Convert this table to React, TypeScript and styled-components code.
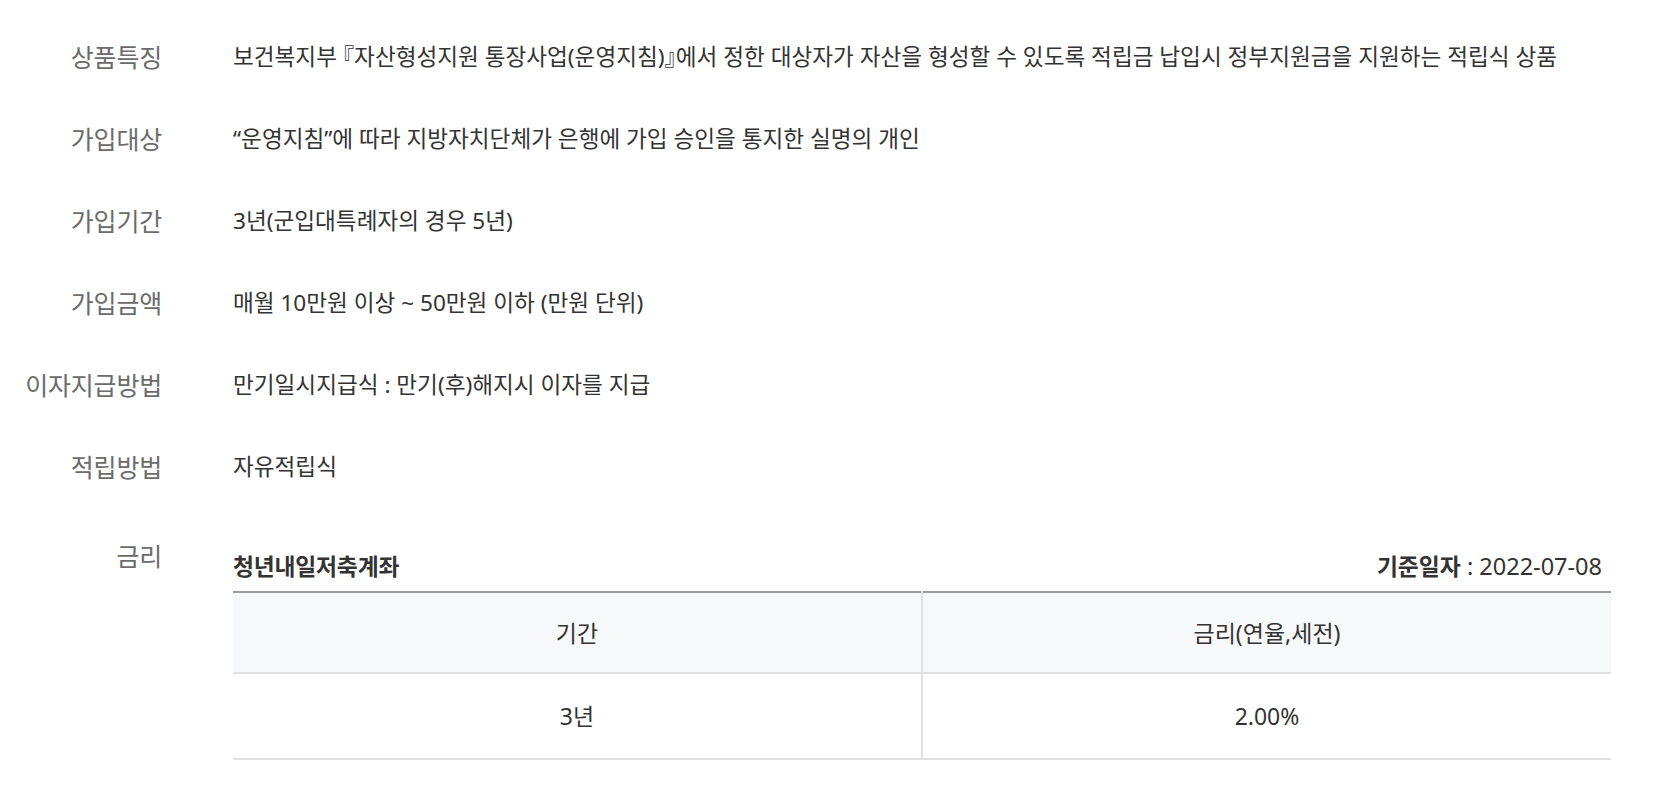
import React from 'react';
import styled, { createGlobalStyle } from 'styled-components';

const GlobalStyle = createGlobalStyle`
  html, body { margin: 0; padding: 0; background: #ffffff; }
  body {
    font-family: "Noto Sans", "Noto Sans CJK KR", sans-serif;
    color: #333333;
  }
  * { box-sizing: border-box; }
`;

const Page = styled.div`
  padding: 16px 49px 0 0;
`;

const InfoList = styled.dl`
  margin: 0;
  display: flex;
  flex-direction: column;
`;

const Row = styled.div<{ $top?: number }>`
  display: flex;
  align-items: flex-start;
  padding: ${(p) => p.$top ?? 26}px 0 26px;
`;

const Label = styled.dt`
  flex: 0 0 162px;
  margin: 0;
  text-align: right;
  color: #6b6b6b;
  font-size: 25px;
  line-height: 30px;
  letter-spacing: -0.2px;
  white-space: nowrap;
`;

const Value = styled.dd`
  flex: 1;
  margin: 0 0 0 71px;
  color: #333333;
  font-size: 22.6px;
  line-height: 30px;
  letter-spacing: 0;
  font-feature-settings: "halt";
`;

const RateBlock = styled.div`
  padding-top: 10px;
`;

const RateHead = styled.div`
  display: flex;
  justify-content: space-between;
  align-items: baseline;
  padding-right: 9px;
  margin-bottom: 9px;
  font-feature-settings: normal;
`;

const RateTitle = styled.strong`
  font-size: 22.8px;
  font-weight: 700;
  color: #333333;
  letter-spacing: -0.2px;
`;

const BaseDate = styled.span`
  font-size: 23.5px;
  color: #333333;
  letter-spacing: 0;
  b { font-weight: 700; font-size: 22.8px; }
`;

const Table = styled.table`
  width: 100%;
  border-collapse: collapse;
  table-layout: fixed;
  border-top: 2px solid #9b9b9b;
`;

const HeadCell = styled.th`
  height: 81px;
  background: #f7f8fa;
  font-weight: 400;
  font-size: 23px;
  color: #333333;
  border-bottom: 2px solid #e1e1e1;
  & + & { border-left: 2px solid #e1e1e1; }
`;

const BodyCell = styled.td`
  height: 86px;
  text-align: center;
  font-size: 23px;
  color: #333333;
  border-bottom: 2px solid #e1e1e1;
  & + & { border-left: 2px solid #e1e1e1; }
`;

const items: [string, string][] = [
  ['상품특징', '보건복지부 『자산형성지원 통장사업(운영지침)』에서 정한 대상자가 자산을 형성할 수 있도록 적립금 납입시 정부지원금을 지원하는 적립식 상품'],
  ['가입대상', '“운영지침”에 따라 지방자치단체가 은행에 가입 승인을 통지한 실명의 개인'],
  ['가입기간', '3년(군입대특례자의 경우 5년)'],
  ['가입금액', '매월 10만원 이상 ~ 50만원 이하 (만원 단위)'],
  ['이자지급방법', '만기일시지급식 : 만기(후)해지시 이자를 지급'],
  ['적립방법', '자유적립식'],
];

export default function App() {
  return (
    <Page>
      <GlobalStyle />
      <InfoList>
        {items.map(([k, v]) => (
          <Row key={k}>
            <Label>{k}</Label>
            <Value>{v}</Value>
          </Row>
        ))}
        <Row $top={33}>
          <Label>금리</Label>
          <Value>
            <RateBlock>
              <RateHead>
                <RateTitle>청년내일저축계좌</RateTitle>
                <BaseDate>
                  <b>기준일자</b> : 2022-07-08
                </BaseDate>
              </RateHead>
              <Table>
                <thead>
                  <tr>
                    <HeadCell>기간</HeadCell>
                    <HeadCell>금리(연율,세전)</HeadCell>
                  </tr>
                </thead>
                <tbody>
                  <tr>
                    <BodyCell>3년</BodyCell>
                    <BodyCell>2.00%</BodyCell>
                  </tr>
                </tbody>
              </Table>
            </RateBlock>
          </Value>
        </Row>
      </InfoList>
    </Page>
  );
}
